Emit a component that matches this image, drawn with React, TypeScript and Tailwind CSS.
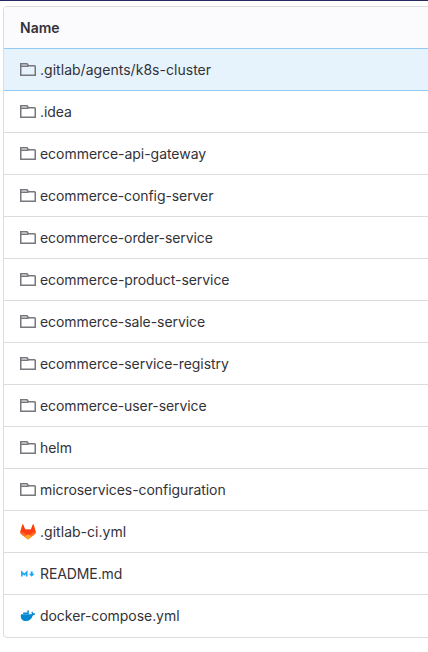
import React from 'react';

type IconKind = 'folder' | 'gitlab' | 'markdown' | 'docker';

const entries: { name: string; icon: IconKind; tracking: string }[] = [
  { name: '.gitlab/agents/k8s-cluster', icon: 'folder', tracking: 'tracking-[0.03px]' },
  { name: '.idea', icon: 'folder', tracking: 'tracking-[-0.06px]' },
  { name: 'ecommerce-api-gateway', icon: 'folder', tracking: 'tracking-[-0.04px]' },
  { name: 'ecommerce-config-server', icon: 'folder', tracking: 'tracking-[-0.08px]' },
  { name: 'ecommerce-order-service', icon: 'folder', tracking: 'tracking-[-0.08px]' },
  { name: 'ecommerce-product-service', icon: 'folder', tracking: 'tracking-[-0.06px]' },
  { name: 'ecommerce-sale-service', icon: 'folder', tracking: 'tracking-[-0.07px]' },
  { name: 'ecommerce-service-registry', icon: 'folder', tracking: 'tracking-[-0.06px]' },
  { name: 'ecommerce-user-service', icon: 'folder', tracking: 'tracking-[-0.08px]' },
  { name: 'helm', icon: 'folder', tracking: 'tracking-[-0.06px]' },
  { name: 'microservices-configuration', icon: 'folder', tracking: 'tracking-[-0.06px]' },
  { name: '.gitlab-ci.yml', icon: 'gitlab', tracking: 'tracking-[0.03px]' },
  { name: 'README.md', icon: 'markdown', tracking: 'tracking-[-0.1px]' },
  { name: 'docker-compose.yml', icon: 'docker', tracking: 'tracking-[-0.05px]' },
];

function FileIcon({ kind }: { kind: IconKind }) {
  if (kind === 'folder') {
    return (
      <svg className="size-4 shrink-0" viewBox="0 0 16 16" fill="none" stroke="#77767d" strokeWidth="1.5">
        <path d="M.75 4.500V1.750H7L8.500 3.750H14.500Q15.250 3.750 15.250 4.500V13.250H.75V4.250H8.500" />
      </svg>
    );
  }
  if (kind === 'gitlab') {
    return (
      <svg className="size-4 shrink-0" viewBox="0 0 16 16">
        <path fill="#fc6d26" d="M.2 8.200 2.400.4 3.100.4 5.100 5.400H10.900L12.900.4H13.600L15.800 8.200Q16 9.400 15 10.200L8 15.500 1 10.200Q0 9.400.2 8.200Z" />
        <path fill="#ff3d12" d="M.2 8.200 2.400.4 3.100.4 5.100 5.400H10.900L12.900.4H13.600L15.800 8.200C14.200 8 12.700 8.500 11.400 9.400L8 12 4.600 9.400C3.300 8.500 1.800 8 .2 8.200Z" />
        <path fill="#fca326" d="m4.500 12.850 3.500-2.650 3.500 2.650L8 15.500Z" />
      </svg>
    );
  }
  if (kind === 'markdown') {
    return (
      <svg className="size-4 shrink-0" viewBox="0 0 16 16" fill="none" stroke="#16a5f5" strokeWidth="1.6">
        <path d="M1.900 10.500V6.200l2.400 2.500 2.400-2.500v4.300" />
        <path fill="#16a5f5" stroke="none" d="M10.700 5.400h2V7.700H14.500l-2.800 3L8.900 7.700h1.800Z" />
      </svg>
    );
  }
  return (
    <svg className="size-4 shrink-0" viewBox="0 0 16 16" fill="#0288d1">
      <path d="M7.200 2.600h1.700v1.600H7.200ZM3.200 4.500h5.700v1.600H3.200ZM1.300 6.300h9.800c.6-.3.700-.8.500-1.400-.2-.5-.1-1 .4-1.400.7.400 1.100 1.100 1.200 1.900.8-.1 1.500 0 2 .5-.4.900-1.200 1.400-2.300 1.400-1.100 3.800-3.500 5.800-6.900 5.800-3.500 0-5.400-1.900-5.200-5.500 0-.6.100-1 .5-1.300Z" />
    </svg>
  );
}

export default function App() {
  return (
    <div className="h-[652px] w-[428px] overflow-hidden border-t border-[#292961] bg-white pl-[3px] pt-[5px] font-['Inter',sans-serif] text-sm leading-5 text-[#333238]">
      <div className="h-[632px] w-[440px] overflow-hidden rounded border border-[#dcdcde]">
        <div className="flex h-[41px] items-center bg-[#fbfafd] pl-4 font-semibold">Name</div>
        <ul>
          {entries.map(({ name, icon, tracking }, i) => (
            <li
              key={name}
              className={
                i === 0
                  ? 'flex h-[42px] items-center gap-1 border-t border-[#8fcbf4] bg-[#e6f3fc] pl-4'
                  : i === 1
                    ? 'flex h-[42px] items-center gap-1 border-t border-[#8fcbf4] pl-4'
                    : 'flex h-[42px] items-center gap-1 border-t border-[#dcdcde] pl-4'
              }
            >
              <FileIcon kind={icon} />
              <span className={tracking}>{name}</span>
            </li>
          ))}
        </ul>
      </div>
    </div>
  );
}
